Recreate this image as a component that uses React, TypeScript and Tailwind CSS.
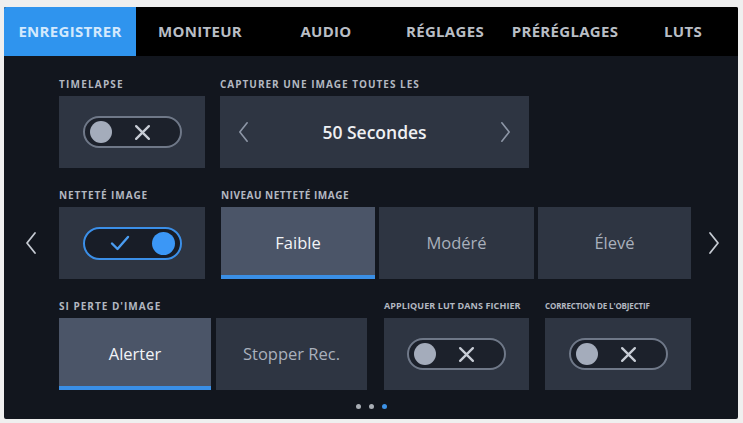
import React from "react";

const font = { fontFamily: '"Open Sans", "Noto Sans", sans-serif' };

function ChevronLeft({ cls }: { cls: string }) {
  return (
    <svg viewBox="0 0 12 24" className={cls} fill="none" stroke="currentColor" strokeWidth="1.8" strokeLinecap="round" strokeLinejoin="round">
      <path d="M10 2 L2 12 L10 22" />
    </svg>
  );
}
function ChevronRight({ cls }: { cls: string }) {
  return (
    <svg viewBox="0 0 12 24" className={cls} fill="none" stroke="currentColor" strokeWidth="1.8" strokeLinecap="round" strokeLinejoin="round">
      <path d="M2 2 L10 12 L2 22" />
    </svg>
  );
}

function ToggleOff() {
  return (
    <div className="w-[99px] h-[32px] rounded-full border-2 border-[#6f7888] bg-[#1c212b] flex items-center pl-[5px]">
      <div className="w-[22px] h-[22px] rounded-full bg-[#a4acbb]" />
      <svg viewBox="0 0 16 16" className="w-[17px] h-[17px] ml-[22px] text-[#c7ccd5]" fill="none" stroke="currentColor" strokeWidth="2.2" strokeLinecap="round">
        <path d="M2 2 L14 14 M14 2 L2 14" />
      </svg>
    </div>
  );
}

function ToggleOn() {
  return (
    <div className="w-[99px] h-[33px] rounded-full border-2 border-[#3b8fe8] bg-[#181d27] flex items-center justify-end pr-[5px]">
      <svg viewBox="0 0 20 16" className="w-[20px] h-[16px] mr-[22px] text-[#4a9cf0]" fill="none" stroke="currentColor" strokeWidth="2.4" strokeLinecap="round" strokeLinejoin="round">
        <path d="M2 8.5 L7.5 14 L18 2" />
      </svg>
      <div className="w-[23px] h-[23px] rounded-full bg-[#3b97f6]" />
    </div>
  );
}

function Label({ children, cls = "" }: { children: React.ReactNode; cls?: string }) {
  return (
    <div className={"h-[10px] leading-[10px] font-bold uppercase text-[#b3b8c1] whitespace-nowrap " + cls}>
      {children}
    </div>
  );
}

function OptBox({ text, selected, w }: { text: string; selected?: boolean; w: string }) {
  return (
    <div
      className={
        "h-[72px] flex items-center justify-center text-[16.5px] " +
        w +
        (selected ? " bg-[#4b5568] text-[#f2f4f7] border-b-4 border-[#3a8fe6] pt-[4px]" : " bg-[#2e3542] text-[#a9b0bc]")
      }
    >
      {text}
    </div>
  );
}

export default function App() {
  const tabs = [
    { t: "MONITEUR", w: "w-[128px]" },
    { t: "AUDIO", w: "w-[124px]" },
    { t: "RÉGLAGES", w: "w-[114px]" },
    { t: "PRÉRÉGLAGES", w: "w-[126px]" },
    { t: "LUTS", w: "w-[110px]" },
  ];
  return (
    <div className="w-[743px] h-[423px] bg-[#efefef] pl-[4px] pt-[7px]" style={font}>
      <div className="w-[734px] h-[412px] bg-[#12161e] flex flex-col overflow-hidden rounded-[2px]">
        {/* Tabs */}
        <div className="h-[49px] bg-black flex items-stretch text-[15px] font-bold tracking-[0.02em]">
          <div className="w-[132px] bg-[#2f94ee] text-[#d3e9fd] flex items-center justify-center">ENREGISTRER</div>
          {tabs.map((x) => (
            <div key={x.t} className={x.w + " flex items-center justify-center text-[#b9bec5]"}>
              {x.t}
            </div>
          ))}
        </div>

        {/* Content */}
        <div className="flex flex-col pt-[23px]">
          {/* Row 1 */}
          <div className="flex pl-[55px]">
            <div className="flex flex-col gap-[7px] w-[146px]">
              <Label cls="text-[10px] tracking-[0.12em]">Timelapse</Label>
              <div className="h-[72px] bg-[#2e3542] flex items-center justify-center">
                <ToggleOff />
              </div>
            </div>
            <div className="flex flex-col gap-[7px] ml-[15px]">
              <Label cls="text-[10px] tracking-[0.1em]">Capturer une image toutes les</Label>
              <div className="h-[72px] w-[309px] bg-[#2e3542] flex items-center justify-between px-[18px] text-[#8c95a5]">
                <ChevronLeft cls="w-[11px] h-[22px]" />
                <span className="text-[17.5px] font-semibold text-[#eef0f3]">50 Secondes</span>
                <ChevronRight cls="w-[11px] h-[22px]" />
              </div>
            </div>
          </div>

          {/* Row 2 */}
          <div className="flex items-end mt-[22px]">
            <div className="w-[55px] h-[72px] flex items-center justify-center pr-[2px] text-[#c5cad2]">
              <ChevronLeft cls="w-[12px] h-[26px]" />
            </div>
            <div className="flex flex-col gap-[7px] w-[146px]">
              <Label cls="text-[10px] tracking-[0.09em]">Netteté image</Label>
              <div className="h-[72px] bg-[#2e3542] flex items-center justify-center">
                <ToggleOn />
              </div>
            </div>
            <div className="flex flex-col gap-[7px] ml-[16px]">
              <Label cls="text-[10px] tracking-[0.05em]">Niveau netteté image</Label>
              <div className="flex gap-[4px]">
                <OptBox text="Faible" selected w="w-[154px]" />
                <OptBox text="Modéré" w="w-[155px]" />
                <OptBox text="Élevé" w="w-[153px]" />
              </div>
            </div>
            <div className="flex-1 h-[72px] flex items-center justify-center pr-[2px] text-[#c5cad2]">
              <ChevronRight cls="w-[12px] h-[26px]" />
            </div>
          </div>

          {/* Row 3 */}
          <div className="flex pl-[55px] mt-[22px]">
            <div className="flex flex-col gap-[7px]">
              <Label cls="text-[10px] tracking-[0.1em]">Si perte d'image</Label>
              <div className="flex gap-[5px]">
                <OptBox text="Alerter" selected w="w-[152px]" />
                <OptBox text="Stopper Rec." w="w-[151px]" />
              </div>
            </div>
            <div className="flex flex-col gap-[7px] ml-[17px] w-[145px]">
              <Label cls="text-[9px] tracking-[0.01em]">Appliquer LUT dans fichier</Label>
              <div className="h-[72px] bg-[#2e3542] flex items-center justify-center">
                <ToggleOff />
              </div>
            </div>
            <div className="flex flex-col gap-[7px] ml-[16px] w-[146px]">
              <Label cls="text-[8px] tracking-[-0.02em]">Correction de l'objectif</Label>
              <div className="h-[72px] bg-[#2e3542] flex items-center justify-center">
                <ToggleOff />
              </div>
            </div>
          </div>

          {/* Dots */}
          <div className="flex justify-center gap-[8px] mt-[14px] pl-[1px]">
            <div className="w-[5px] h-[5px] rounded-full bg-[#a9aeb5]" />
            <div className="w-[5px] h-[5px] rounded-full bg-[#a9aeb5]" />
            <div className="w-[5px] h-[5px] rounded-full bg-[#3d92e6]" />
          </div>
        </div>
      </div>
    </div>
  );
}
